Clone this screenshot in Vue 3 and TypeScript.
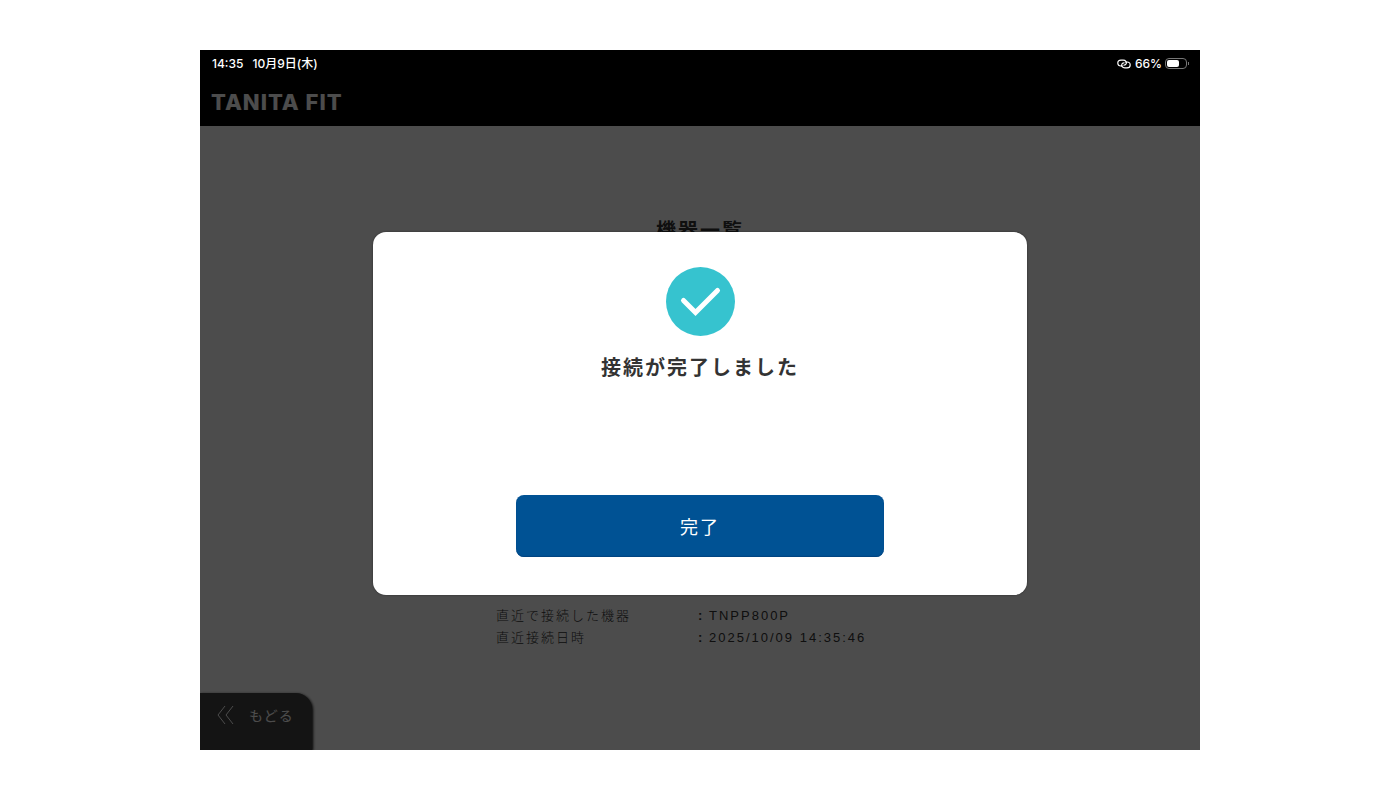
<script setup lang="ts">
import { ref } from 'vue'

interface Detail {
  label: string
  value: string
}

const batteryLevel = ref<number>(66)
const dialogOpen = ref<boolean>(true)
const details: Detail[] = [
  { label: '直近で接続した機器', value: 'TNPP800P' },
  { label: '直近接続日時', value: '2025/10/09 14:35:46' },
]
</script>

<template>
  <div class="page">
    <div class="device">
      <div class="status">
        <time>14:35</time>
        <span class="date">10月9日(木)</span>
        <svg class="link-icon" viewBox="0 0 14 10" aria-hidden="true">
          <path d="M5.6 7H4A3.2 2.9 0 0 1 4 1.2H6.2C8.6 1.2 10 3 9.2 4.8C8.8 5.8 7.8 6.2 7 6.2" />
          <path d="M8.4 3H10A3.2 2.9 0 0 1 10 8.8H7.8C5.4 8.8 4 7 4.8 5.2C5.2 4.2 6.2 3.8 7 3.8" />
        </svg>
        <span>{{ batteryLevel }}%</span>
        <span class="battery">
          <span class="charge" :style="{ width: batteryLevel + '%' }"></span>
        </span>
      </div>

      <header class="header">
        <span class="logo">TANITA FIT</span>
      </header>

      <main class="content">
        <h1 class="title">機器一覧</h1>
        <dl class="details">
          <template v-for="item in details" :key="item.label">
            <dt>{{ item.label }}</dt>
            <dd><span class="colon">:</span>{{ item.value }}</dd>
          </template>
        </dl>
        <button class="back" type="button">
          <svg class="back-icon" viewBox="0 0 18 20" aria-hidden="true">
            <path d="M8 1L1 10L8 19M16 1L9 10L16 19" />
          </svg>
          <span>もどる</span>
        </button>
      </main>

      <div v-if="dialogOpen" class="overlay">
        <section class="dialog" role="dialog" aria-modal="true" aria-labelledby="dialog-message">
          <svg class="check" viewBox="0 0 69 69" aria-hidden="true">
            <circle cx="34.5" cy="34.5" r="34.5" />
            <path d="M17.5 33.5L29.5 45.5L51.5 23.5" />
          </svg>
          <p id="dialog-message" class="message">接続が完了しました</p>
          <button class="done" type="button" @click="dialogOpen = false">完了</button>
        </section>
      </div>
    </div>
  </div>
</template>

<style>
body {
  margin: 0;
  background: #fff;
}
</style>

<style scoped>
.page {
  box-sizing: border-box;
  display: flex;
  min-height: 100vh;
  padding: 50px 200px;
  font-family: "Liberation Sans", "Noto Sans CJK JP", sans-serif;
  color: #333;
}

.device {
  position: relative;
  display: flex;
  flex: 1;
  flex-direction: column;
  overflow: hidden;
  background: #fff;
}

.status {
  display: flex;
  align-items: center;
  height: 27px;
  padding: 0 13px 0 12px;
  background: #000;
  color: #fff;
  font: 500 12px/18px Inter, "Noto Sans CJK JP", sans-serif;
}

.date {
  margin: 0 auto 0 9px;
}

.link-icon {
  width: 14px;
  height: 10px;
  margin-right: 4px;
  fill: none;
  stroke: #fff;
  stroke-width: 1.2;
  stroke-linecap: round;
}

.battery {
  position: relative;
  box-sizing: border-box;
  width: 22px;
  height: 11px;
  margin-left: 3px;
  padding: 1px;
  border: 1px solid #777;
  border-radius: 4px;
}

.battery::after {
  position: absolute;
  top: 3px;
  right: -3px;
  width: 1px;
  height: 3px;
  background: #777;
  content: "";
}

.charge {
  display: block;
  height: 7px;
  border-radius: 2px;
  background: #fff;
}

.header {
  display: flex;
  align-items: center;
  height: 49px;
  padding: 0 11px;
  background: #000;
}

.logo {
  color: #fff;
  font: 800 22px/30px Inter, sans-serif;
  letter-spacing: 1px;
}

.content {
  display: flex;
  flex: 1;
  flex-direction: column;
  align-items: center;
  padding-top: 90px;
}

.title {
  margin: 0;
  font-size: 20px;
  font-weight: 700;
  line-height: 30px;
  letter-spacing: 2px;
}

.details {
  display: grid;
  grid-template-columns: 1fr 1fr;
  width: 100%;
  max-width: 408px;
  margin: 359px 0 0;
  font-size: 13px;
  font-weight: 300;
  line-height: 22px;
  letter-spacing: 2px;
}

.details dd {
  margin: 0;
  white-space: nowrap;
}

.colon {
  display: inline-block;
  width: 11px;
  margin-left: -2px;
  font-weight: 700;
}

.back {
  display: flex;
  align-items: center;
  align-self: flex-start;
  gap: 14px;
  height: 57px;
  margin-top: auto;
  padding: 0 18px 14px 17px;
  border: 0;
  border-radius: 0 16px 0 0;
  background: #434343;
  box-shadow: 1px 1px 3px #000;
  color: #fff;
  font: 400 14px/20px "Noto Sans CJK JP", sans-serif;
  letter-spacing: 1px;
}

.back-icon {
  width: 18px;
  height: 20px;
  fill: none;
  stroke: #fff;
  stroke-width: 1;
}

.overlay {
  position: absolute;
  inset: 27px 0 0;
  display: flex;
  align-items: center;
  justify-content: center;
  background: rgb(0 0 0 / 70%);
}

.dialog {
  box-sizing: border-box;
  display: flex;
  flex-direction: column;
  align-items: center;
  width: 100%;
  max-width: 654px;
  padding: 35px 24px 38px;
  border-radius: 13px;
  background: #fff;
  box-shadow: 0 0 2px rgb(0 0 0 / 50%);
}

.check {
  width: 69px;
  height: 69px;
  fill: #36c3cf;
}

.check path {
  fill: none;
  stroke: #fff;
  stroke-width: 5;
  stroke-linecap: round;
}

.message {
  margin: 17px 0 112px;
  font-size: 20px;
  font-weight: 700;
  line-height: 30px;
  letter-spacing: 2px;
}

.done {
  width: 100%;
  max-width: 368px;
  height: 62px;
  padding: 0;
  border: 0;
  border-radius: 8px;
  background: #005294;
  box-shadow: inset 0 -1px 1px #00437f;
  color: #fff;
  font: 400 18px/26px "Noto Sans CJK JP", sans-serif;
  letter-spacing: 2px;
}
</style>
